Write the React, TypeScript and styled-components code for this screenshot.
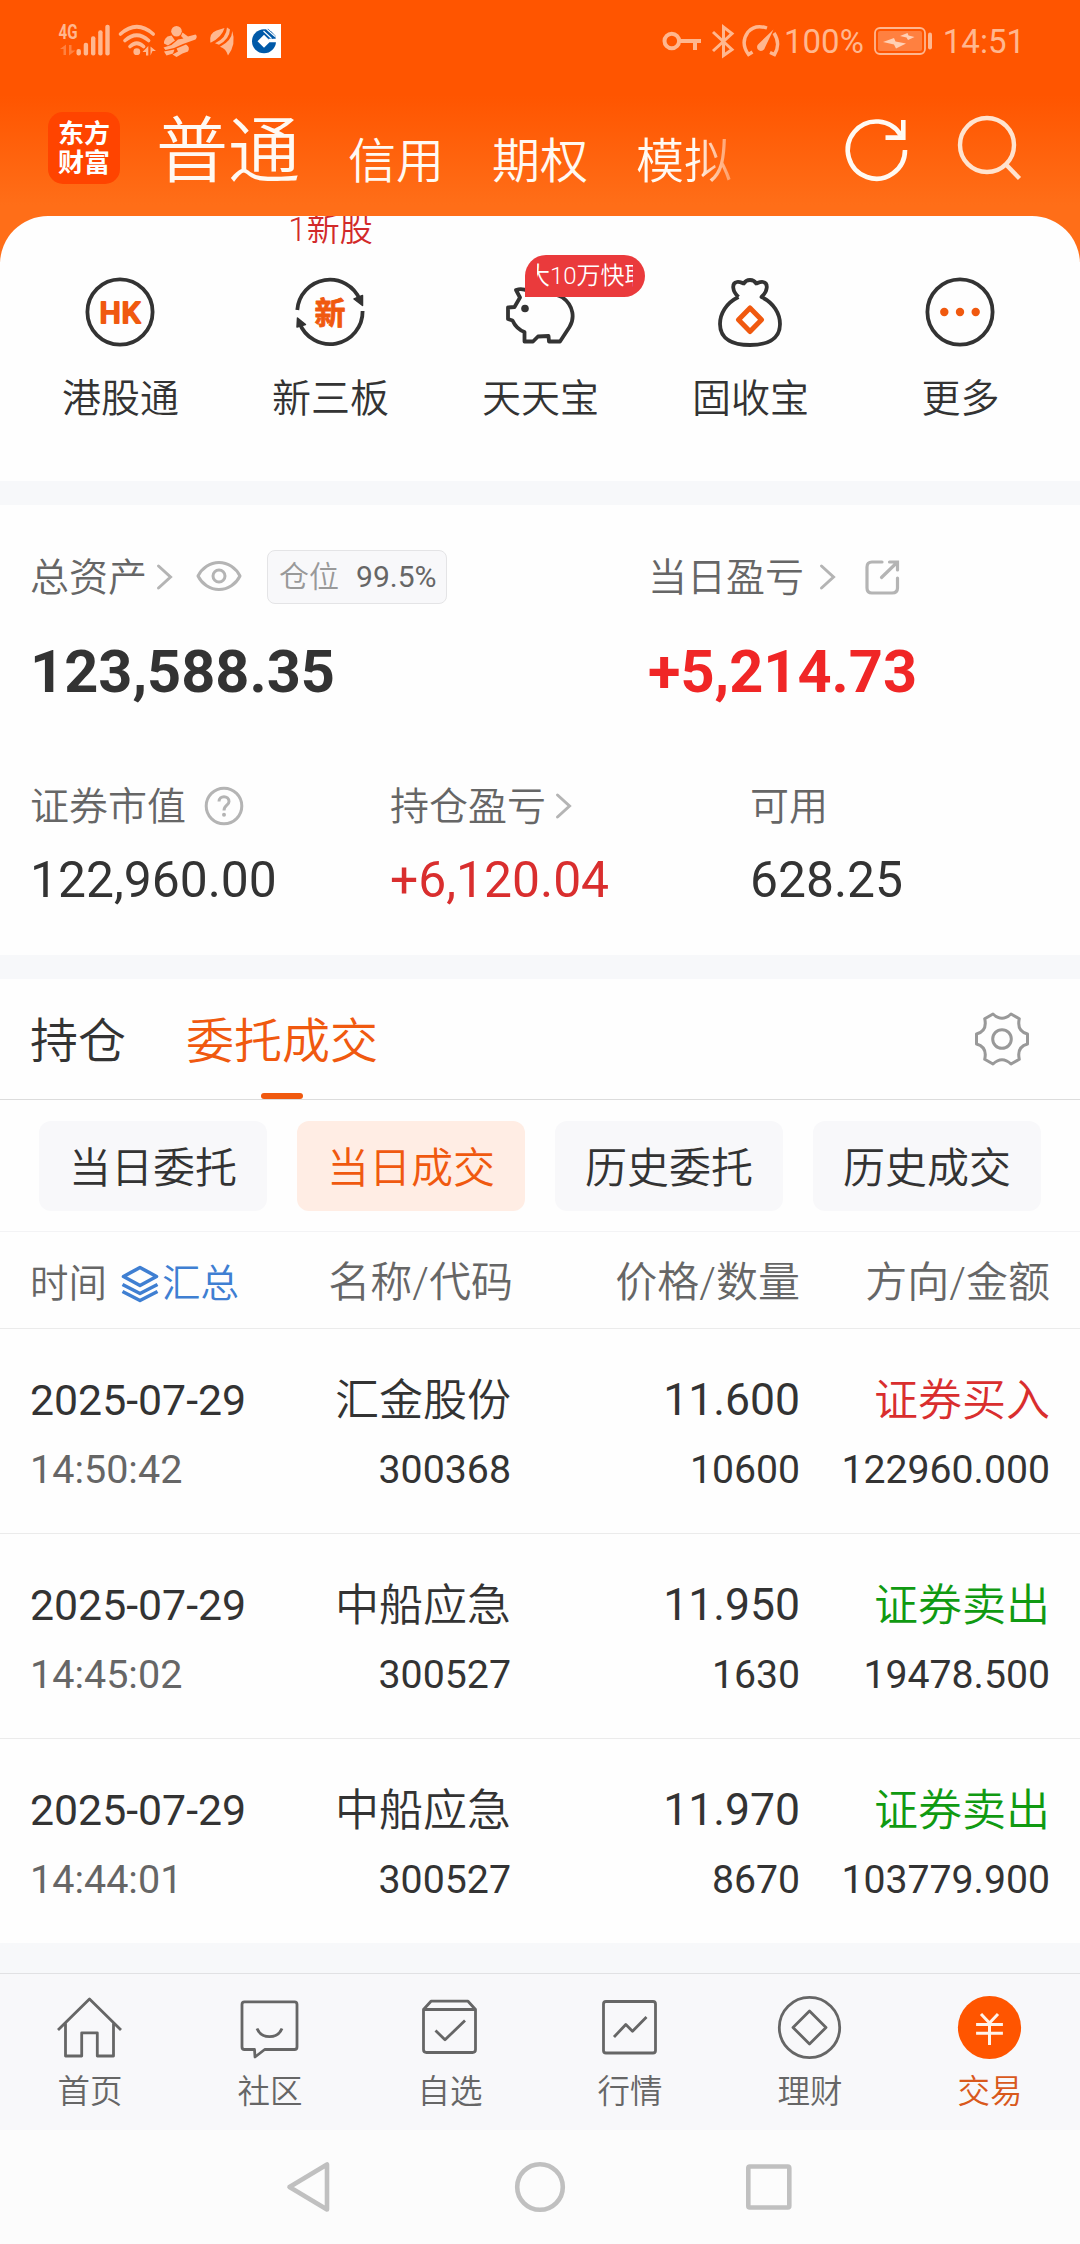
import React from 'react';
import styled, { createGlobalStyle, css } from 'styled-components';

const Global = createGlobalStyle`
  html, body { margin: 0; padding: 0; background: #fff; }
  * { box-sizing: border-box; }
  body { font-family: Roboto, "Noto Sans CJK SC", sans-serif; color: #333; }
  svg { display: block; flex: none; overflow: visible; }
`;

const INK = '#333';
const GREY = '#666';
const ORANGE = '#f0590f';
const RED = '#d92e2e';
const GREEN = '#109a12';
const FAINT = '#b4b4b4';

const Screen = styled.div`
  width: 1080px;
  height: 2244px;
  display: flex;
  flex-direction: column;
  background: #fefefe;
  overflow: hidden;
`;

/* ---------- header ---------- */

const Hero = styled.header`
  height: 262px;
  margin-bottom: -46px;
  flex: none;
  background: linear-gradient(#ff5500 0, #ff5500 95px, #ff6e18 205px, #ff6e18 100%);
`;

const StatusBar = styled.div`
  height: 82px;
  padding: 0 55px 0 59px;
  display: flex;
  justify-content: space-between;
  align-items: center;
  color: #ffb78f;
  font-size: 34px;
`;

const StatusGroup = styled.div`
  display: flex;
  align-items: center;
`;

const StatusText = styled.span<{ $left?: number; $size?: number }>`
  margin-left: ${p => p.$left ?? 0}px;
  padding-top: 1px;
  font-size: ${p => p.$size ?? 33}px;
  line-height: 40px;
`;

const TitleBar = styled.div`
  height: 134px;
  padding: 0 58px 0 48px;
  display: flex;
  align-items: flex-start;
`;

const Logo = styled.div`
  width: 72px;
  height: 72px;
  margin-top: 30px;
  padding-top: 8px;
  border-radius: 15px;
  background: #ff4400;
  color: #fff;
  font-size: 26px;
  font-weight: 700;
  line-height: 29px;
  text-align: center;
  display: flex;
  flex-direction: column;
`;

const AccountTabs = styled.nav`
  width: 620px;
  margin-left: 36px;
  margin-top: 22px;
  display: flex;
  gap: 48px;
  color: #fff9f2;
`;

const AccountTab = styled.span<{ $big?: boolean; $fade?: boolean }>`
  font-size: ${p => (p.$big ? 72 : 48)}px;
  font-weight: 350;
  line-height: ${p => (p.$big ? 95 : 116)}px;
  white-space: nowrap;
  ${p =>
    p.$fade &&
    css`
      background: linear-gradient(90deg, #fff9f2 62%, rgba(255, 249, 242, 0.35) 100%);
      background-clip: text;
      color: transparent;
    `}
`;

const HeaderActions = styled.div`
  margin-top: 35px;
  margin-left: auto;
  display: flex;
  gap: 50px;
`;

/* ---------- shortcuts ---------- */

const Sheet = styled.section`
  height: 265px;
  flex: none;
  padding: 0 15px;
  display: flex;
  background: #fefefe;
  border-radius: 48px 48px 0 0;
  overflow: hidden;
  position: relative;
`;

const Shortcut = styled.div`
  width: 210px;
  padding-top: 60px;
  display: flex;
  flex-direction: column;
  align-items: center;
  position: relative;
`;

const ShortcutLabel = styled.span`
  margin-top: 26px;
  padding-left: 1px;
  font-size: 39px;
  font-weight: 350;
  line-height: 50px;
`;

const NewStockHint = styled.span`
  position: absolute;
  top: -6px;
  left: 0;
  width: 100%;
  padding-left: 1px;
  text-align: center;
  font-size: 33px;
  font-weight: 350;
  line-height: 40px;
  color: #d22a2a;
`;

const PromoBadge = styled.span`
  position: absolute;
  top: 39px;
  left: 90px;
  width: 120px;
  height: 42px;
  padding: 0 12px;
  border-radius: 21px 21px 21px 0;
  background: #ea3a3c;
  color: #fff;
  font-size: 24px;
  font-weight: 350;
  line-height: 42px;
  display: flex;
`;

const PromoClip = styled.span`
  width: 96px;
  overflow: hidden;
  white-space: nowrap;
  text-indent: -11px;
`;

const Band = styled.div<{ $h: number }>`
  height: ${p => p.$h}px;
  flex: none;
  background: #f7f8fa;
`;

/* ---------- assets ---------- */

const Assets = styled.section`
  height: 450px;
  flex: none;
  padding: 45px 0 0 30px;
`;

const TopFigures = styled.div`
  display: grid;
  grid-template-columns: 618px 1fr;
`;

const SubFigures = styled.div`
  margin-top: 81px;
  display: grid;
  grid-template-columns: 360px 360px 1fr;
`;

const LabelRow = styled.div<{ $h: number }>`
  height: ${p => p.$h}px;
  display: flex;
  align-items: center;
`;

const Label = styled.span`
  padding-top: 2px;
  font-size: 39px;
  font-weight: 350;
  line-height: 46px;
  color: ${GREY};
`;

const Spacer = styled.span<{ $w: number }>`
  width: ${p => p.$w}px;
`;

const RatioBadge = styled.span`
  width: 180px;
  height: 54px;
  padding: 0 0 0 11px;
  display: flex;
  align-items: center;
  gap: 17px;
  border: 1px solid #e4e4e6;
  border-radius: 8px;
  background: #f8f8fa;
  font-size: 30px;
  line-height: 50px;
  color: ${GREY};
`;

const RatioName = styled.span`
  color: #999;
  font-weight: 350;
`;

const BigValue = styled.div<{ $color?: string }>`
  margin-top: 38px;
  margin-bottom: -1px;
  font-size: 59.5px;
  font-weight: 700;
  line-height: 60px;
  color: ${p => p.$color ?? INK};
`;

const SubValue = styled.div<{ $color?: string }>`
  margin-top: 22px;
  font-size: 49.8px;
  line-height: 56px;
  color: ${p => p.$color ?? INK};
`;

/* ---------- tabs ---------- */

const SectionTabs = styled.nav`
  height: 121px;
  flex: none;
  padding: 0 51px 0 30px;
  display: flex;
  align-items: center;
  justify-content: space-between;
  border-bottom: 1px solid #dcdcdc;
`;

const TabList = styled.div`
  height: 120px;
  display: flex;
  gap: 60px;
`;

const SectionTab = styled.div<{ $on?: boolean }>`
  padding-top: 32px;
  display: flex;
  flex-direction: column;
  align-items: center;
  font-size: 48px;
  font-weight: 350;
  line-height: 62px;
  color: ${p => (p.$on ? ORANGE : INK)};
`;

const Underline = styled.i`
  width: 42px;
  height: 6px;
  margin-top: 20px;
  border-radius: 3px;
  background: ${ORANGE};
`;

const Chips = styled.div`
  height: 132px;
  flex: none;
  padding: 21px 39px 0;
  display: flex;
  gap: 30px;
  border-bottom: 1px solid #f3f3f5;
`;

const Chip = styled.button<{ $on?: boolean }>`
  width: 228px;
  height: 90px;
  padding: 6px 0 0;
  border: 0;
  border-radius: 12px;
  font: 350 42px/84px Roboto, "Noto Sans CJK SC", sans-serif;
  color: ${p => (p.$on ? ORANGE : INK)};
  background: ${p => (p.$on ? '#ffede4' : '#f8f8fa')};
`;

/* ---------- trades ---------- */

const columns = css`
  display: grid;
  grid-template-columns: 260px 221px 289px 250px;
  padding-left: 30px;
`;

const TableHead = styled.div`
  ${columns}
  height: 97px;
  flex: none;
  align-items: center;
  border-bottom: 1px solid #ebebeb;
  font-size: 42px;
  font-weight: 350;
  line-height: 50px;
  color: ${GREY};
`;

const HeadCell = styled.span<{ $shift?: number }>`
  padding-top: 5px;
  margin-right: ${p => -(p.$shift ?? 0)}px;
  text-align: right;
  white-space: nowrap;
`;

const TimeHead = styled.span`
  padding-top: 7px;
  display: flex;
  align-items: center;
  font-size: 38.5px;
`;

const Summary = styled.span`
  margin-left: 14px;
  display: flex;
  align-items: center;
  gap: 3px;
  color: #3f7fd2;
`;

const Trade = styled.div<{ $last?: boolean }>`
  ${columns}
  height: ${p => (p.$last ? 204 : 205)}px;
  flex: none;
  padding-top: 41px;
  border-bottom: ${p => (p.$last ? 0 : 1)}px solid #ebebeb;
`;

const Cell = styled.div<{ $left?: boolean }>`
  display: flex;
  flex-direction: column;
  gap: ${p => (p.$left ? 9 : 10)}px;
  text-align: ${p => (p.$left ? 'left' : 'right')};
  white-space: nowrap;
`;

const Line = styled.span<{ $size: number; $color?: string; $han?: boolean }>`
  height: 60px;
  line-height: ${p => (p.$han ? 62 : 61)}px;
  font-size: ${p => p.$size}px;
  font-weight: ${p => (p.$han ? 350 : 400)};
  color: ${p => p.$color ?? INK};
`;

/* ---------- bottom bars ---------- */

const NavBar = styled.nav`
  height: 157px;
  flex: none;
  display: flex;
  border-top: 1px solid #e1e1e3;
  background: #f8f8fa;
`;

const NavItem = styled.div<{ $on?: boolean }>`
  width: 180px;
  padding-top: 21px;
  display: flex;
  flex-direction: column;
  align-items: center;
  font-size: 32.5px;
  font-weight: 350;
  line-height: 40px;
  color: ${p => (p.$on ? '#d9591c' : GREY)};
`;

const NavLabel = styled.span`
  margin-top: 13px;
`;

const SystemBar = styled.div`
  flex: 1;
  padding-left: 283px;
  display: flex;
  align-items: center;
  background: #fcfcfc;
`;

/* ---------- drawings ---------- */

const Chevron = () => (
  <svg width="16" height="26" viewBox="0 0 16 26" fill="none" stroke={FAINT} strokeWidth="3" strokeLinecap="round">
    <path d="M1.5 2 13.5 13 1.5 24" />
  </svg>
);

const StatusLeft = () => (
  <svg width="224" height="36" viewBox="59 23 224 36" fill="#ffb78f">
    <text x="58.5" y="38.5" fontSize="20" fontWeight="700" textLength="19" lengthAdjust="spacingAndGlyphs">4G</text>
    <path d="M60 49 66 44.5V55H63.5V49ZM69 45H71.5V50.500L75.500 50.500 69 55.500Z" opacity=".45" />
    <rect x="76.500" y="49" width="4.400" height="6.500" rx="2" />
    <rect x="83.700" y="42.700" width="4.400" height="12.800" rx="2" />
    <rect x="91" y="36.300" width="4.400" height="19.200" rx="2" />
    <rect x="98.200" y="30.300" width="4.400" height="25.200" rx="2" />
    <rect x="105.300" y="24.700" width="4.400" height="30.800" rx="2" />
    <g fill="none" stroke="#ffb78f" strokeWidth="3.600" strokeLinecap="round">
      <path d="M120.500 34Q136.800 19.500 153.200 34" />
      <path d="M125 40.500Q136.800 30 148.600 40.500" />
      <path d="M130 46.500Q136.800 40 143.600 46.500" />
    </g>
    <circle cx="136.800" cy="51.700" r="3.400" />
    <path d="M142.500 52 148.300 46V55.500H146V52ZM150.500 46.500 156 51 152.500 51 150.500 55.500Z" />
    {/* seated figure */}
    <circle cx="176.500" cy="31.200" r="5.300" />
    <path d="M167.500 36.500 171.500 35.500 175 40.500 168 45.500 164 43.500Q163.500 40 167.500 36.500Z" />
    <path d="M182.500 32.500 188 36.500 195.500 34.500Q198 36.500 195.500 39.500L183 44 174 48 165.500 50 163.500 47.500 171.500 45 178 39.500 183.500 38.500 181 36Z" />
    <path d="M164 51.500 174.500 49.500 173 53.500 166.500 55.500ZM176.500 48.500 186 44.500Q190.500 47 188 51.500L182.500 53.500 176.500 57 172.500 54.500 178 51.500Z" />
    {/* petals */}
    <path d="M210.300 42.500Q209 33 216.500 30.500L224.500 28Q222 37 211 42.500ZM215 43.300Q226.500 38 227 27.500L230 29.500Q229.500 39 219 44.800ZM220 46.800Q232 40.500 232.300 31Q236.500 44 228 55.500Q226 48.500 220 46.800Z" />
    {/* bank tile */}
    <rect x="247" y="24" width="34" height="34" fill="#fff" />
    <circle cx="264" cy="41.300" r="12" fill="#0059a8" />
    <path d="M264 34.800 270.500 41.300 264 47.800 257.500 41.300Z" fill="#fff" />
    <path d="M268.500 38.700H278V42.300H269.500Z" fill="#fff" />
    <path d="M264 30.300 272.500 38.800 275.700 36 268 28.800Z" fill="#0059a8" />
    <path d="M263.500 31 271.500 38.500M266.500 29 275 36.500" stroke="#fff" strokeWidth="1.100" />
  </svg>
);

const StatusRightIcons = () => (
  <svg width="118" height="34" viewBox="662 23 118 34" fill="none" stroke="#ffb78f" strokeWidth="3.600">
    <circle cx="671.800" cy="40" r="7.300" strokeWidth="4" />
    <path d="M679 40H701M695 40V49" strokeWidth="4" />
    <path d="M713 31 732 48.500 723.500 54.500V26L732 32.500 713 50" strokeWidth="3" />
    <path d="M767 27Q755 23 748 31Q740 42 748.500 53.500L752.500 51M774 32Q781 43 774.500 53.500L770 51.500" strokeWidth="3.400" />
    <path d="M773.500 28.500 765 46.500A4 4 0 1 1 759 42.500Z" fill="#ffb78f" stroke="none" />
  </svg>
);

const Battery = () => (
  <svg width="59" height="28" viewBox="0 0 59 28">
    <rect x="1" y="1" width="50" height="26" rx="5" fill="none" stroke="#ffb78f" strokeWidth="1.800" />
    <rect x="4" y="4" width="44" height="20" rx="2" fill="#ff8040" />
    <rect x="54" y="5.500" width="4" height="17" rx="2" fill="#ffb78f" />
    <path d="M9 15 20 11 21.500 14.500 32 16.500 22 21.500 20 17.500ZM26 9 33.500 6 34.500 8.500 40.500 10 34 13 32.500 10.500Z" fill="#ffd0b5" />
  </svg>
);

const Refresh = () => (
  <svg width="64" height="64" viewBox="-32 -32 64 64" fill="none" stroke="#fffaf3" strokeWidth="4.600">
    <path d="M29 1A28.600 28.600 0 1 1 25 -13.500" />
    <path d="M27.300 -29V-11.400H9.500" />
  </svg>
);

const Search = () => (
  <svg width="64" height="64" viewBox="-30 -30 64 64" fill="none" stroke="#ffe3cf" strokeWidth="4.400">
    <circle cx="-1" cy="-2" r="27" />
    <path d="M17.500 17 31.500 31.500" />
  </svg>
);

const Ring = () => <circle cx="36" cy="36" r="32.600" />;

const shortcutArt: Record<string, React.ReactNode> = {
  hk: (
    <>
      <Ring />
      <text x="36" y="46.800" fontSize="30" fontWeight="500" textAnchor="middle" fill={ORANGE} stroke={ORANGE} strokeWidth="1.800" textLength="41" lengthAdjust="spacing">HK</text>
    </>
  ),
  xin: (
    <>
      <path d="M3.300 34A32.600 32.600 0 0 1 66 24" />
      <path d="M68.600 35A32.600 32.600 0 0 1 5.500 47" />
      <path d="M60 23 68.500 19.500V29.500ZM3.500 42 3 51 11.500 48.500Z" fill={INK} strokeWidth="1.500" />
      <text x="36" y="47.500" fontSize="31" fontWeight="700" textAnchor="middle" fill={ORANGE} stroke={ORANGE} strokeWidth=".8">新</text>
    </>
  ),
  pig: (
    <>
      <path d="M12 14 16 21.500 10.500 31 4 31.500V43L8.500 44.500C11 50 15 54 20.500 56V65.500H29L34 60.500 44.500 60 45 65.500H56L65.500 51C70.500 43 70.500 30 58 21C48 16 36 15 28 19L24 15C20 13 15 13 12 14Z" />
      <circle cx="21" cy="32.500" r="3.800" fill={INK} stroke="none" />
    </>
  ),
  bag: (
    <>
      <path d="M24.500 21C12 27 6 38 6 48C6 64 20 69 36 69S66 64 66 48C66 38 60 27 47.500 21C54 15 54.500 7 49 6C46 5.500 44 7 42 7.500C40.500 4.500 38.500 4 36 4S31.500 4.500 30 7.500C28 7 26 5.500 23 6C17.500 7 18 15 24.500 21" />
      <path d="M36 32 47.500 43.700 36 55.500 24.500 43.700Z" stroke={ORANGE} strokeWidth="5" />
    </>
  ),
  more: (
    <>
      <Ring />
      <g fill={ORANGE} stroke="none">
        <circle cx="20.300" cy="36" r="4.200" />
        <circle cx="36" cy="36" r="4.200" />
        <circle cx="51.700" cy="36" r="4.200" />
      </g>
    </>
  ),
};

const ShortcutIcon = ({ name }: { name: string }) => (
  <svg width="72" height="72" viewBox="0 0 72 72" fill="none" stroke={INK} strokeWidth="3.800" strokeLinejoin="round">
    {shortcutArt[name]}
  </svg>
);

const Eye = () => (
  <svg width="46" height="32" viewBox="-23 -15 46 32" fill="none" stroke={FAINT} strokeWidth="3">
    <path d="M-21 0C-17 -8 -9 -13.500 0 -13.500S17 -8 21 0C17 8 9 13.500 0 13.500S-17 8 -21 0Z" strokeLinejoin="round" />
    <circle r="6" />
  </svg>
);

const Export = () => (
  <svg width="35" height="35" viewBox="0 0 35 35" fill="none" stroke={FAINT} strokeWidth="3.200" strokeLinecap="round">
    <path d="M17 2H7Q2 2 2 7V28Q2 33 7 33H27Q32.500 33 32.500 28V18M16.500 17.500 32 2.500M24.500 2H32.500V10" />
  </svg>
);

const Help = () => (
  <svg width="40" height="40" viewBox="-20 -20 40 40" fill="none" stroke={FAINT} strokeWidth="3">
    <circle r="17.800" />
    <path d="M-5 -4.500C-5 -11 5 -11 5 -4.500C5 -0.500 0 -1 0 4.500" />
    <circle cy="8.800" r="2" fill={FAINT} stroke="none" />
  </svg>
);

const Gear = () => (
  <svg width="54" height="54" viewBox="-27 -27 54 54" fill="none" stroke="#999" strokeWidth="3" strokeLinejoin="round">
    <path d="M-9 -25Q0 -16.500 9 -25L17.300 -20.300Q14.500 -8 25.500 -5V5Q14.500 8 17.300 20.300L9 25Q0 16.500 -9 25L-17.300 20.300Q-14.500 8 -25.500 5V-5Q-14.500 -8 -17.300 -20.300Z" />
    <circle r="9.300" />
  </svg>
);

const Layers = () => (
  <svg width="38" height="38" viewBox="-19 -19 38 38" fill="none" stroke="#3f7fd2" strokeWidth="3.600" strokeLinejoin="round">
    <path d="M0 -16.500 16.500 -7.500 0 1.500 -16.500 -7.500Z" />
    <path d="M-17.500 0.500 0 9.500 17.500 0.500M-17.500 7.500 0 16.500 17.500 7.500" />
  </svg>
);

const navArt: Record<string, React.ReactNode> = {
  home: <path d="M-31.500 2.500 0 -28.500 31.500 2.500M-24 -4V28.500H-7.800V5.300H7.800V28.500H24V-4" />,
  chat: (
    <>
      <path d="M-25 -25.700H25Q27.500 -25.700 27.500 -23V19.500Q27.500 22 25 22H-4.800L-14.500 29.500 -15 22H-25Q-27.500 22 -27.500 19.500V-23Q-27.500 -25.700 -25 -25.700Z" />
      <path d="M-12.500 1Q-9 9.200 0 9.200T12.500 1" />
    </>
  ),
  box: <path d="M-26 -18H26V22Q26 25 23 25H-23Q-26 25 -26 22ZL-18.500 -26.300H18.500L26 -18M-14 3 -4.500 12.300 15.500 -7" />,
  chart: (
    <>
      <rect x="-26" y="-26" width="52" height="51.500" rx="2.500" />
      <path d="M-15.500 9.500-3.700 -3 3 3.700 17 -10.500" />
    </>
  ),
  coin: (
    <>
      <circle r="30.200" />
      <path d="M0 -16.500 16.500 0 0 16.500 -16.500 0Z" />
    </>
  ),
  trade: (
    <>
      <circle r="31.600" fill="#ff5500" stroke="none" />
      <path d="M-8.500 -13.500 0 -4.500 8.500 -13.500M0 -4.500V17.500M-13.400 -3H13.400M-13.400 5.800H13.400" stroke="#fff3ea" strokeWidth="3" />
    </>
  ),
};

const NavIcon = ({ name }: { name: string }) => (
  <svg width="64" height="64" viewBox="-31.5 -32.5 64 64" fill="none" stroke={GREY} strokeWidth="2.800" strokeLinejoin="round">
    {navArt[name]}
  </svg>
);

const SystemKeys = () => (
  <svg width="512" height="54" viewBox="283 2160 512 54" fill="none" stroke="#c0c0c0" strokeWidth="4.600" strokeLinejoin="round">
    <path d="M289.500 2187 327 2164.500V2209.500Z" />
    <circle cx="540" cy="2187" r="22.800" />
    <rect x="748.300" y="2166.500" width="41" height="41" rx="1.500" />
  </svg>
);

/* ---------- data ---------- */

const shortcuts = [
  { icon: 'hk', name: '港股通' },
  { icon: 'xin', name: '新三板', hint: '1新股' },
  { icon: 'pig', name: '天天宝', promo: '大10万快取' },
  { icon: 'bag', name: '固收宝' },
  { icon: 'more', name: '更多' },
];

const trades = [
  { date: '2025-07-29', time: '14:50:42', name: '汇金股份', code: '300368', price: '11.600', qty: '10600', side: '证券买入', buy: true, sum: '122960.000' },
  { date: '2025-07-29', time: '14:45:02', name: '中船应急', code: '300527', price: '11.950', qty: '1630', side: '证券卖出', buy: false, sum: '19478.500' },
  { date: '2025-07-29', time: '14:44:01', name: '中船应急', code: '300527', price: '11.970', qty: '8670', side: '证券卖出', buy: false, sum: '103779.900' },
];

const navItems = [
  ['home', '首页'],
  ['chat', '社区'],
  ['box', '自选'],
  ['chart', '行情'],
  ['coin', '理财'],
  ['trade', '交易'],
];

export default function App() {
  return (
    <Screen>
      <Global />
      <Hero>
        <StatusBar>
          <StatusLeft />
          <StatusGroup>
            <StatusRightIcons />
            <StatusText $left={4}>100%</StatusText>
            <Spacer $w={10} />
            <Battery />
            <StatusText $left={10}>14:51</StatusText>
          </StatusGroup>
        </StatusBar>
        <TitleBar>
          <Logo>
            <span>东方</span>
            <span>财富</span>
          </Logo>
          <AccountTabs>
            <AccountTab $big>普通</AccountTab>
            <AccountTab>信用</AccountTab>
            <AccountTab>期权</AccountTab>
            <AccountTab $fade>模拟</AccountTab>
          </AccountTabs>
          <HeaderActions>
            <Refresh />
            <Search />
          </HeaderActions>
        </TitleBar>
      </Hero>

      <Sheet>
        {shortcuts.map(s => (
          <Shortcut key={s.name}>
            {s.hint && <NewStockHint>{s.hint}</NewStockHint>}
            <ShortcutIcon name={s.icon} />
            {s.promo && (
              <PromoBadge>
                <PromoClip>{s.promo}</PromoClip>
              </PromoBadge>
            )}
            <ShortcutLabel>{s.name}</ShortcutLabel>
          </Shortcut>
        ))}
      </Sheet>
      <Band $h={24} />

      <Assets>
        <TopFigures>
          <div>
            <LabelRow $h={54}>
              <Label>总资产</Label>
              <Spacer $w={10} />
              <Chevron />
              <Spacer $w={23} />
              <Eye />
              <Spacer $w={25} />
              <RatioBadge>
                <RatioName>仓位</RatioName>
                <span>99.5%</span>
              </RatioBadge>
            </LabelRow>
            <BigValue>123,588.35</BigValue>
          </div>
          <div>
            <LabelRow $h={54}>
              <Label>当日盈亏</Label>
              <Spacer $w={16} />
              <Chevron />
              <Spacer $w={29} />
              <Export />
            </LabelRow>
            <BigValue $color="#f02626">+5,214.73</BigValue>
          </div>
        </TopFigures>
        <SubFigures>
          <div>
            <LabelRow $h={48}>
              <Label>证券市值</Label>
              <Spacer $w={18} />
              <Help />
            </LabelRow>
            <SubValue>122,960.00</SubValue>
          </div>
          <div>
            <LabelRow $h={48}>
              <Label>持仓盈亏</Label>
              <Spacer $w={10} />
              <Chevron />
            </LabelRow>
            <SubValue $color={RED}>+6,120.04</SubValue>
          </div>
          <div>
            <LabelRow $h={48}>
              <Label>可用</Label>
            </LabelRow>
            <SubValue>628.25</SubValue>
          </div>
        </SubFigures>
      </Assets>
      <Band $h={24} />

      <SectionTabs>
        <TabList>
          <SectionTab>持仓</SectionTab>
          <SectionTab $on>
            委托成交
            <Underline />
          </SectionTab>
        </TabList>
        <Gear />
      </SectionTabs>
      <Chips>
        <Chip>当日委托</Chip>
        <Chip $on>当日成交</Chip>
        <Chip>历史委托</Chip>
        <Chip>历史成交</Chip>
      </Chips>

      <TableHead>
        <TimeHead>
          时间
          <Summary>
            <Layers />
            汇总
          </Summary>
        </TimeHead>
        <HeadCell $shift={2}>名称/代码</HeadCell>
        <HeadCell>价格/数量</HeadCell>
        <HeadCell>方向/金额</HeadCell>
      </TableHead>
      {trades.map((t, i) => (
        <Trade key={t.time} $last={i === trades.length - 1}>
          <Cell $left>
            <Line $size={42.8}>{t.date}</Line>
            <Line $size={39.5} $color={GREY}>{t.time}</Line>
          </Cell>
          <Cell>
            <Line $size={44} $han>{t.name}</Line>
            <Line $size={39.3}>{t.code}</Line>
          </Cell>
          <Cell>
            <Line $size={44.5}>{t.price}</Line>
            <Line $size={39.2}>{t.qty}</Line>
          </Cell>
          <Cell>
            <Line $size={44} $han $color={t.buy ? RED : GREEN}>{t.side}</Line>
            <Line $size={39.2}>{t.sum}</Line>
          </Cell>
        </Trade>
      ))}
      <Band $h={30} />

      <NavBar>
        {navItems.map(([icon, label]) => (
          <NavItem key={icon} $on={icon === 'trade'}>
            <NavIcon name={icon} />
            <NavLabel>{label}</NavLabel>
          </NavItem>
        ))}
      </NavBar>
      <SystemBar>
        <SystemKeys />
      </SystemBar>
    </Screen>
  );
}
